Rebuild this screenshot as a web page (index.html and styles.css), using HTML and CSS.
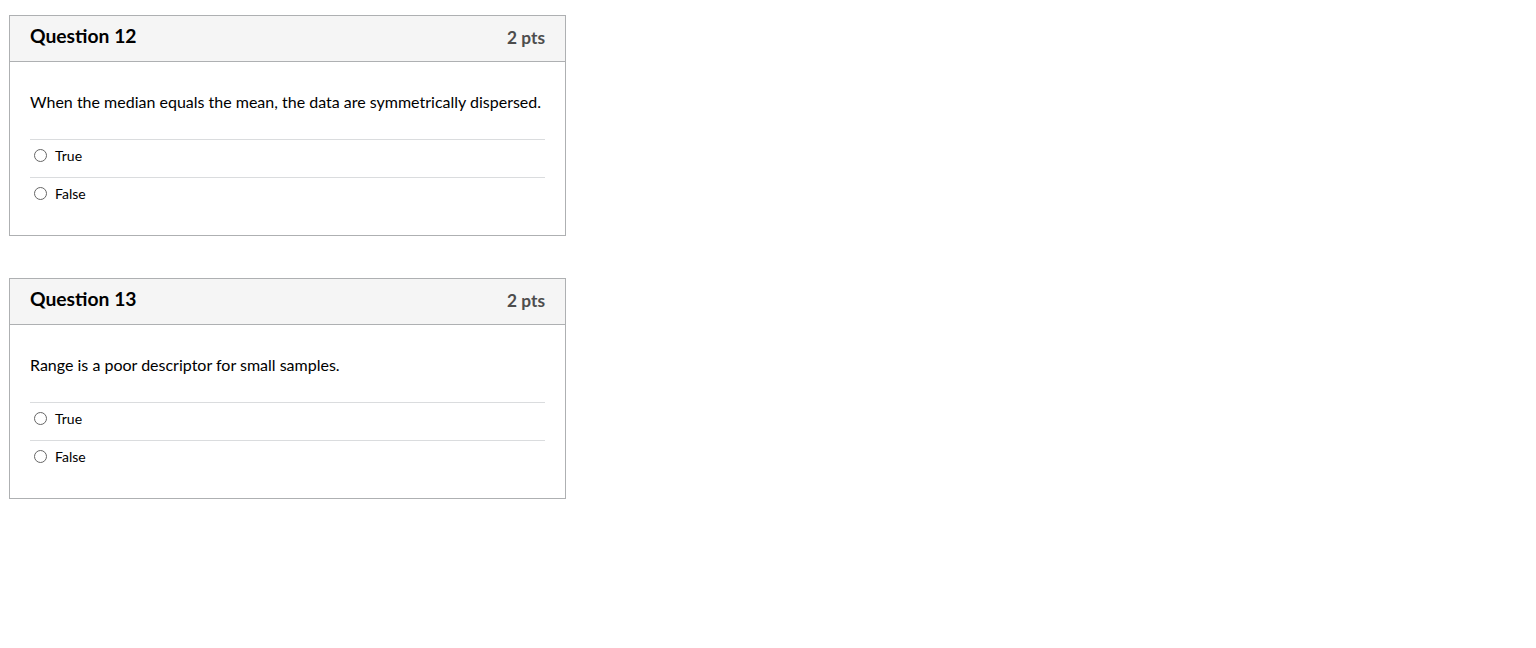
FILE: index.html
```html
<!DOCTYPE html>
<html lang="en">
<head>
<meta charset="utf-8">
<title>Quiz</title>
<link rel="stylesheet" href="styles.css">
</head>
<body>
<div class="page">
  <div class="question">
    <div class="q-header">
      <span class="q-title">Question 12</span>
      <span class="q-points">2 pts</span>
    </div>
    <div class="q-body">
      <p class="q-text">When the median equals the mean, the data are symmetrically dispersed.</p>
      <div class="answers">
        <label class="answer"><span class="radio"></span><span class="a-text">True</span></label>
        <label class="answer"><span class="radio"></span><span class="a-text">False</span></label>
      </div>
    </div>
  </div>
  <div class="question">
    <div class="q-header">
      <span class="q-title">Question 13</span>
      <span class="q-points">2 pts</span>
    </div>
    <div class="q-body">
      <p class="q-text">Range is a poor descriptor for small samples.</p>
      <div class="answers">
        <label class="answer"><span class="radio"></span><span class="a-text">True</span></label>
        <label class="answer"><span class="radio"></span><span class="a-text">False</span></label>
      </div>
    </div>
  </div>
</div>
</body>
</html>
```
FILE: styles.css
```css
html, body {
  margin: 0;
  padding: 0;
  background: #fff;
}
body {
  font-family: Lato, "Liberation Sans", sans-serif;
  color: #2d3b45;
}
.page {
  padding: 15px 0 0 9px;
  display: flex;
  flex-direction: column;
  gap: 42px;
}
.question {
  width: 555px;
  border: 1px solid #aeb0b2;
  background: #fff;
}
.q-header {
  height: 46px;
  box-sizing: border-box;
  padding: 9px 20px 0 20px;
  background: #f5f5f5;
  border-bottom: 1px solid #aeb0b2;
  display: flex;
  justify-content: space-between;
  align-items: flex-start;
}
.q-title {
  font-size: 19.3px;
  font-weight: 700;
  line-height: 22px;
  color: #000;
}
.q-points {
  font-size: 17.3px;
  font-weight: 700;
  line-height: 22px;
  padding-top: 2px;
  color: #4d4d4d;
}
.q-body {
  padding: 29px 20px 20px 20px;
}
.q-text {
  margin: 0 0 26px 0;
  font-size: 16px;
  line-height: 22px;
  color: #000;
}
.answers {
  display: flex;
  flex-direction: column;
}
.answer {
  display: flex;
  align-items: center;
  gap: 8px;
  border-top: 1px solid #dadcde;
  box-sizing: border-box;
  height: 38px;
  padding: 0 0 6px 4px;
  font-size: 14px;
  color: #000;
}
.radio {
  width: 11px;
  height: 11px;
  border: 1px solid #666;
  border-radius: 50%;
  flex: none;
}
.a-text {
  line-height: 20px;
}
```
